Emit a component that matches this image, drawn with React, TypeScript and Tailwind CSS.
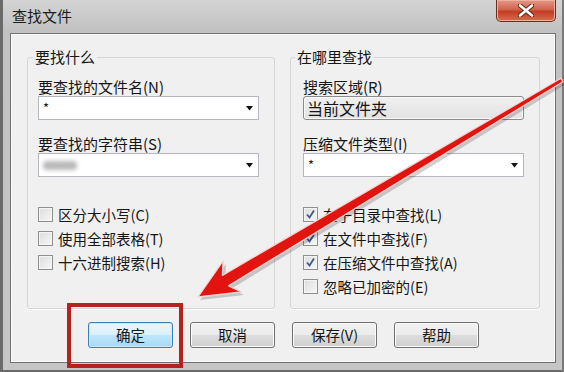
import React from "react";

const FONT = "font-['Noto_Sans_CJK_SC','Noto_Sans',sans-serif]";

function Arrow() {
  return (
    <svg width="7" height="5" viewBox="0 0 7 5" className="shrink-0">
      <path d="M0 0 H7 L3.5 4.5 Z" fill="#111" />
    </svg>
  );
}

function Combo({ children }: { children?: React.ReactNode }) {
  return (
    <div className="mt-[1px] flex h-[24px] w-[221px] items-center justify-between border border-[#b4b7bd] bg-white pl-[4px] pr-[5px]">
      <div className="flex items-center">{children}</div>
      <Arrow />
    </div>
  );
}

function Check({ label, checked }: { label: string; checked?: boolean }) {
  return (
    <div className="flex h-[24px] items-center gap-[5px]">
      <div className="grid h-[15px] w-[15px] place-items-center border border-[#8e8f8f] bg-[linear-gradient(135deg,#dcdcdc,#f8f8f8)] shadow-[inset_0_0_0_1px_#f4f4f4]">
        {checked && (
          <svg width="11" height="11" viewBox="0 0 11 11">
            <path d="M2 5.5 L4.5 8.5 L9 1.5" fill="none" stroke="#41568a" strokeWidth="1.8" />
          </svg>
        )}
      </div>
      <span className="text-[14.5px] leading-[17px]">{label}</span>
    </div>
  );
}

function Btn({ label, primary }: { label: string; primary?: boolean }) {
  return (
    <div
      className={
        primary
          ? "grid h-[26px] w-[85px] place-items-center rounded-[3px] border border-[#3c7fb1] bg-[linear-gradient(180deg,#eaf6fd_0%,#d9f0fc_50%,#bee6fd_51%,#a7d9f5_100%)] text-[14.5px] shadow-[inset_0_0_0_1px_#cbe9f9]"
          : "grid h-[26px] w-[85px] place-items-center rounded-[3px] border border-[#707070] bg-[linear-gradient(180deg,#f2f2f2_0%,#ebebeb_50%,#dddddd_51%,#cfcfcf_100%)] text-[14.5px] shadow-[inset_0_0_0_1px_#fbfbfb]"
      }
    >
      {label}
    </div>
  );
}

export default function App() {
  return (
    <div
      className={`relative flex h-[372px] w-[564px] flex-col overflow-hidden bg-[linear-gradient(180deg,#d4d4d4_0px,#c2c2c2_30px,#c6c6c6_100%)] pb-[9px] pl-[10px] pr-[8px] text-[#161616] shadow-[inset_3px_0_0_#6a6a6a,inset_-2px_0_0_#7a7a7a,inset_0_-2px_0_#6a6a6a] ${FONT}`}
    >
      {/* title bar */}
      <div className="flex h-[33px] shrink-0 items-start justify-between">
        <span className="pl-[2px] pt-[7px] text-[15px] leading-[18px] text-[#1c1c1c]">查找文件</span>
        <div className="grid h-[22px] w-[60px] place-items-center rounded-b-[5px] border border-t-0 border-[#6b2c22] bg-[linear-gradient(180deg,#e39a88_0%,#d0634b_45%,#c13e23_55%,#dd6a4e_100%)] shadow-[inset_0_0_0_1px_#eeb0a0]">
          <svg width="16" height="13" viewBox="0 0 16 13">
            <path d="M2 1.5 L14 11.5 M14 1.5 L2 11.5" stroke="#5a2418" strokeWidth="4.5" strokeLinecap="round" />
            <path d="M2 1.5 L14 11.5 M14 1.5 L2 11.5" stroke="#ffffff" strokeWidth="2.6" strokeLinecap="round" />
          </svg>
        </div>
      </div>

      {/* client area */}
      <div className="flex flex-1 flex-col border border-[#707070] bg-[#f0f0f0] shadow-[inset_0_0_0_1px_#fafafa]">
        <div className="mt-[16px] flex gap-[15px] pl-[16px]">
          <fieldset className="h-[259px] w-[248px] rounded-[3px] border border-[#d5d5d5] px-[10px] shadow-[0_1px_0_#fff]">
            <legend className="-ml-[5px] px-[2px] text-[15px] leading-[14px]">要找什么</legend>
            <div className="pt-[14px] text-[15px] leading-[17px]">要查找的文件名(N)</div>
            <Combo>
              <span className="text-[13px] leading-[14px]">*</span>
            </Combo>
            <div className="mt-[15px] text-[15px] leading-[17px]">要查找的字符串(S)</div>
            <Combo>
              <div className="h-[9px] w-[34px] rounded-[4px] bg-[#b8b8b8] blur-[2px]" />
            </Combo>
            <div className="mt-[25px]">
              <Check label="区分大小写(C)" />
              <Check label="使用全部表格(T)" />
              <Check label="十六进制搜索(H)" />
            </div>
          </fieldset>

          <fieldset className="h-[259px] w-[250px] rounded-[3px] border border-[#d5d5d5] px-[12px] shadow-[0_1px_0_#fff]">
            <legend className="-ml-[8px] px-[2px] text-[15px] leading-[14px]">在哪里查找</legend>
            <div className="pt-[14px] text-[15px] leading-[17px]">搜索区域(R)</div>
            <div className="mt-[1px] flex h-[24px] w-[221px] items-center rounded-[3px] border border-[#8a8a8a] bg-[linear-gradient(180deg,#f0f0f0,#e2e2e2)] pl-[3px] text-[16px] leading-[18px] shadow-[inset_0_0_0_1px_#fafafa]">
              当前文件夹
            </div>
            <div className="mt-[15px] text-[15px] leading-[17px]">压缩文件类型(I)</div>
            <Combo>
              <span className="text-[13px] leading-[14px]">*</span>
            </Combo>
            <div className="mt-[25px]">
              <Check label="在子目录中查找(L)" checked />
              <Check label="在文件中查找(F)" checked />
              <Check label="在压缩文件中查找(A)" checked />
              <Check label="忽略已加密的(E)" />
            </div>
          </fieldset>
        </div>

        <div className="mt-[13px] flex gap-[17px] pl-[77px]">
          <Btn label="确定" primary />
          <Btn label="取消" />
          <Btn label="保存(V)" />
          <Btn label="帮助" />
        </div>
      </div>

      {/* annotation overlay */}
      <svg className="pointer-events-none absolute inset-0" width="564" height="372" viewBox="0 0 564 372">
        <polygon
          points="200,300 244,295 231,289 566,84 564,81 225,279 226,264"
          fill="#000"
          opacity="0.18"
        />
        <polygon
          points="198,297 241.5,292 228.6,285.8 563,81.7 561,78.3 222.4,275.4 223.1,261"
          fill="#e1140f"
          stroke="#f7d4d0"
          strokeWidth="1.3"
          strokeLinejoin="round"
        />
        <rect x="69" y="305" width="112" height="61" fill="none" stroke="#b6221e" strokeWidth="4" />
      </svg>
    </div>
  );
}
